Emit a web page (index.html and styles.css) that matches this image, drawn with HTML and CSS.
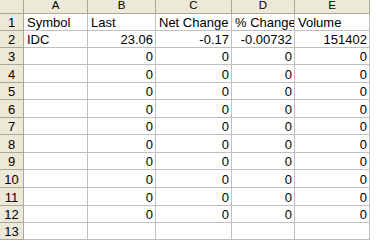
FILE: index.html
```html
<!DOCTYPE html>
<html>
<head>
<meta charset="utf-8">
<link rel="stylesheet" href="styles.css">
</head>
<body>
<div class="sheet">
  <div class="corner"></div>
  <div class="colhead">A</div>
  <div class="colhead">B</div>
  <div class="colhead">C</div>
  <div class="colhead">D</div>
  <div class="colhead">E</div>

  <div class="rowhead">1</div>
  <div class="cell">Symbol</div>
  <div class="cell">Last</div>
  <div class="cell">Net Change</div>
  <div class="cell">% Change</div>
  <div class="cell">Volume</div>

  <div class="rowhead">2</div>
  <div class="cell">IDC</div>
  <div class="cell num">23.06</div>
  <div class="cell num">-0.17</div>
  <div class="cell num">-0.00732</div>
  <div class="cell num">151402</div>

  <div class="rowhead">3</div>
  <div class="cell"></div>
  <div class="cell num">0</div>
  <div class="cell num">0</div>
  <div class="cell num">0</div>
  <div class="cell num">0</div>

  <div class="rowhead">4</div>
  <div class="cell"></div>
  <div class="cell num">0</div>
  <div class="cell num">0</div>
  <div class="cell num">0</div>
  <div class="cell num">0</div>

  <div class="rowhead">5</div>
  <div class="cell"></div>
  <div class="cell num">0</div>
  <div class="cell num">0</div>
  <div class="cell num">0</div>
  <div class="cell num">0</div>

  <div class="rowhead">6</div>
  <div class="cell"></div>
  <div class="cell num">0</div>
  <div class="cell num">0</div>
  <div class="cell num">0</div>
  <div class="cell num">0</div>

  <div class="rowhead">7</div>
  <div class="cell"></div>
  <div class="cell num">0</div>
  <div class="cell num">0</div>
  <div class="cell num">0</div>
  <div class="cell num">0</div>

  <div class="rowhead">8</div>
  <div class="cell"></div>
  <div class="cell num">0</div>
  <div class="cell num">0</div>
  <div class="cell num">0</div>
  <div class="cell num">0</div>

  <div class="rowhead">9</div>
  <div class="cell"></div>
  <div class="cell num">0</div>
  <div class="cell num">0</div>
  <div class="cell num">0</div>
  <div class="cell num">0</div>

  <div class="rowhead">10</div>
  <div class="cell"></div>
  <div class="cell num">0</div>
  <div class="cell num">0</div>
  <div class="cell num">0</div>
  <div class="cell num">0</div>

  <div class="rowhead">11</div>
  <div class="cell"></div>
  <div class="cell num">0</div>
  <div class="cell num">0</div>
  <div class="cell num">0</div>
  <div class="cell num">0</div>

  <div class="rowhead">12</div>
  <div class="cell"></div>
  <div class="cell num">0</div>
  <div class="cell num">0</div>
  <div class="cell num">0</div>
  <div class="cell num">0</div>

  <div class="rowhead">13</div>
  <div class="cell"></div>
  <div class="cell"></div>
  <div class="cell"></div>
  <div class="cell"></div>
  <div class="cell"></div>
</div>
</body>
</html>
```

FILE: styles.css
```css
html, body {
  margin: 0;
  padding: 0;
  background: #ffffff;
}

body {
  width: 378px;
  height: 241px;
  overflow: hidden;
  font-family: "Liberation Sans", Arial, sans-serif;
  font-size: 13px;
  color: #000000;
}

.sheet {
  display: grid;
  grid-template-columns: 24px 64px 68px 76px 63px 75px;
  grid-template-rows: 14px 17px 17px 17px 18px 17px 18px 17px 18px 17px 18px 18px 17px 17px;
  width: max-content;
}

.sheet > div {
  box-sizing: border-box;
  display: flex;
  align-items: flex-end;
  line-height: 15px;
  white-space: nowrap;
}

.corner,
.colhead,
.rowhead {
  background: #ece9d8;
  border-right: 1px solid #aca899;
  border-bottom: 1px solid #aca899;
}

.colhead {
  justify-content: center;
  align-items: center;
  line-height: 13px;
  font-size: 11.5px;
}

.rowhead {
  justify-content: center;
}

.cell {
  border-right: 1px solid #c0c0c0;
  border-bottom: 1px solid #c0c0c0;
  padding: 0 2px 0 3px;
  overflow: hidden;
}

.num {
  justify-content: flex-end;
}
```
